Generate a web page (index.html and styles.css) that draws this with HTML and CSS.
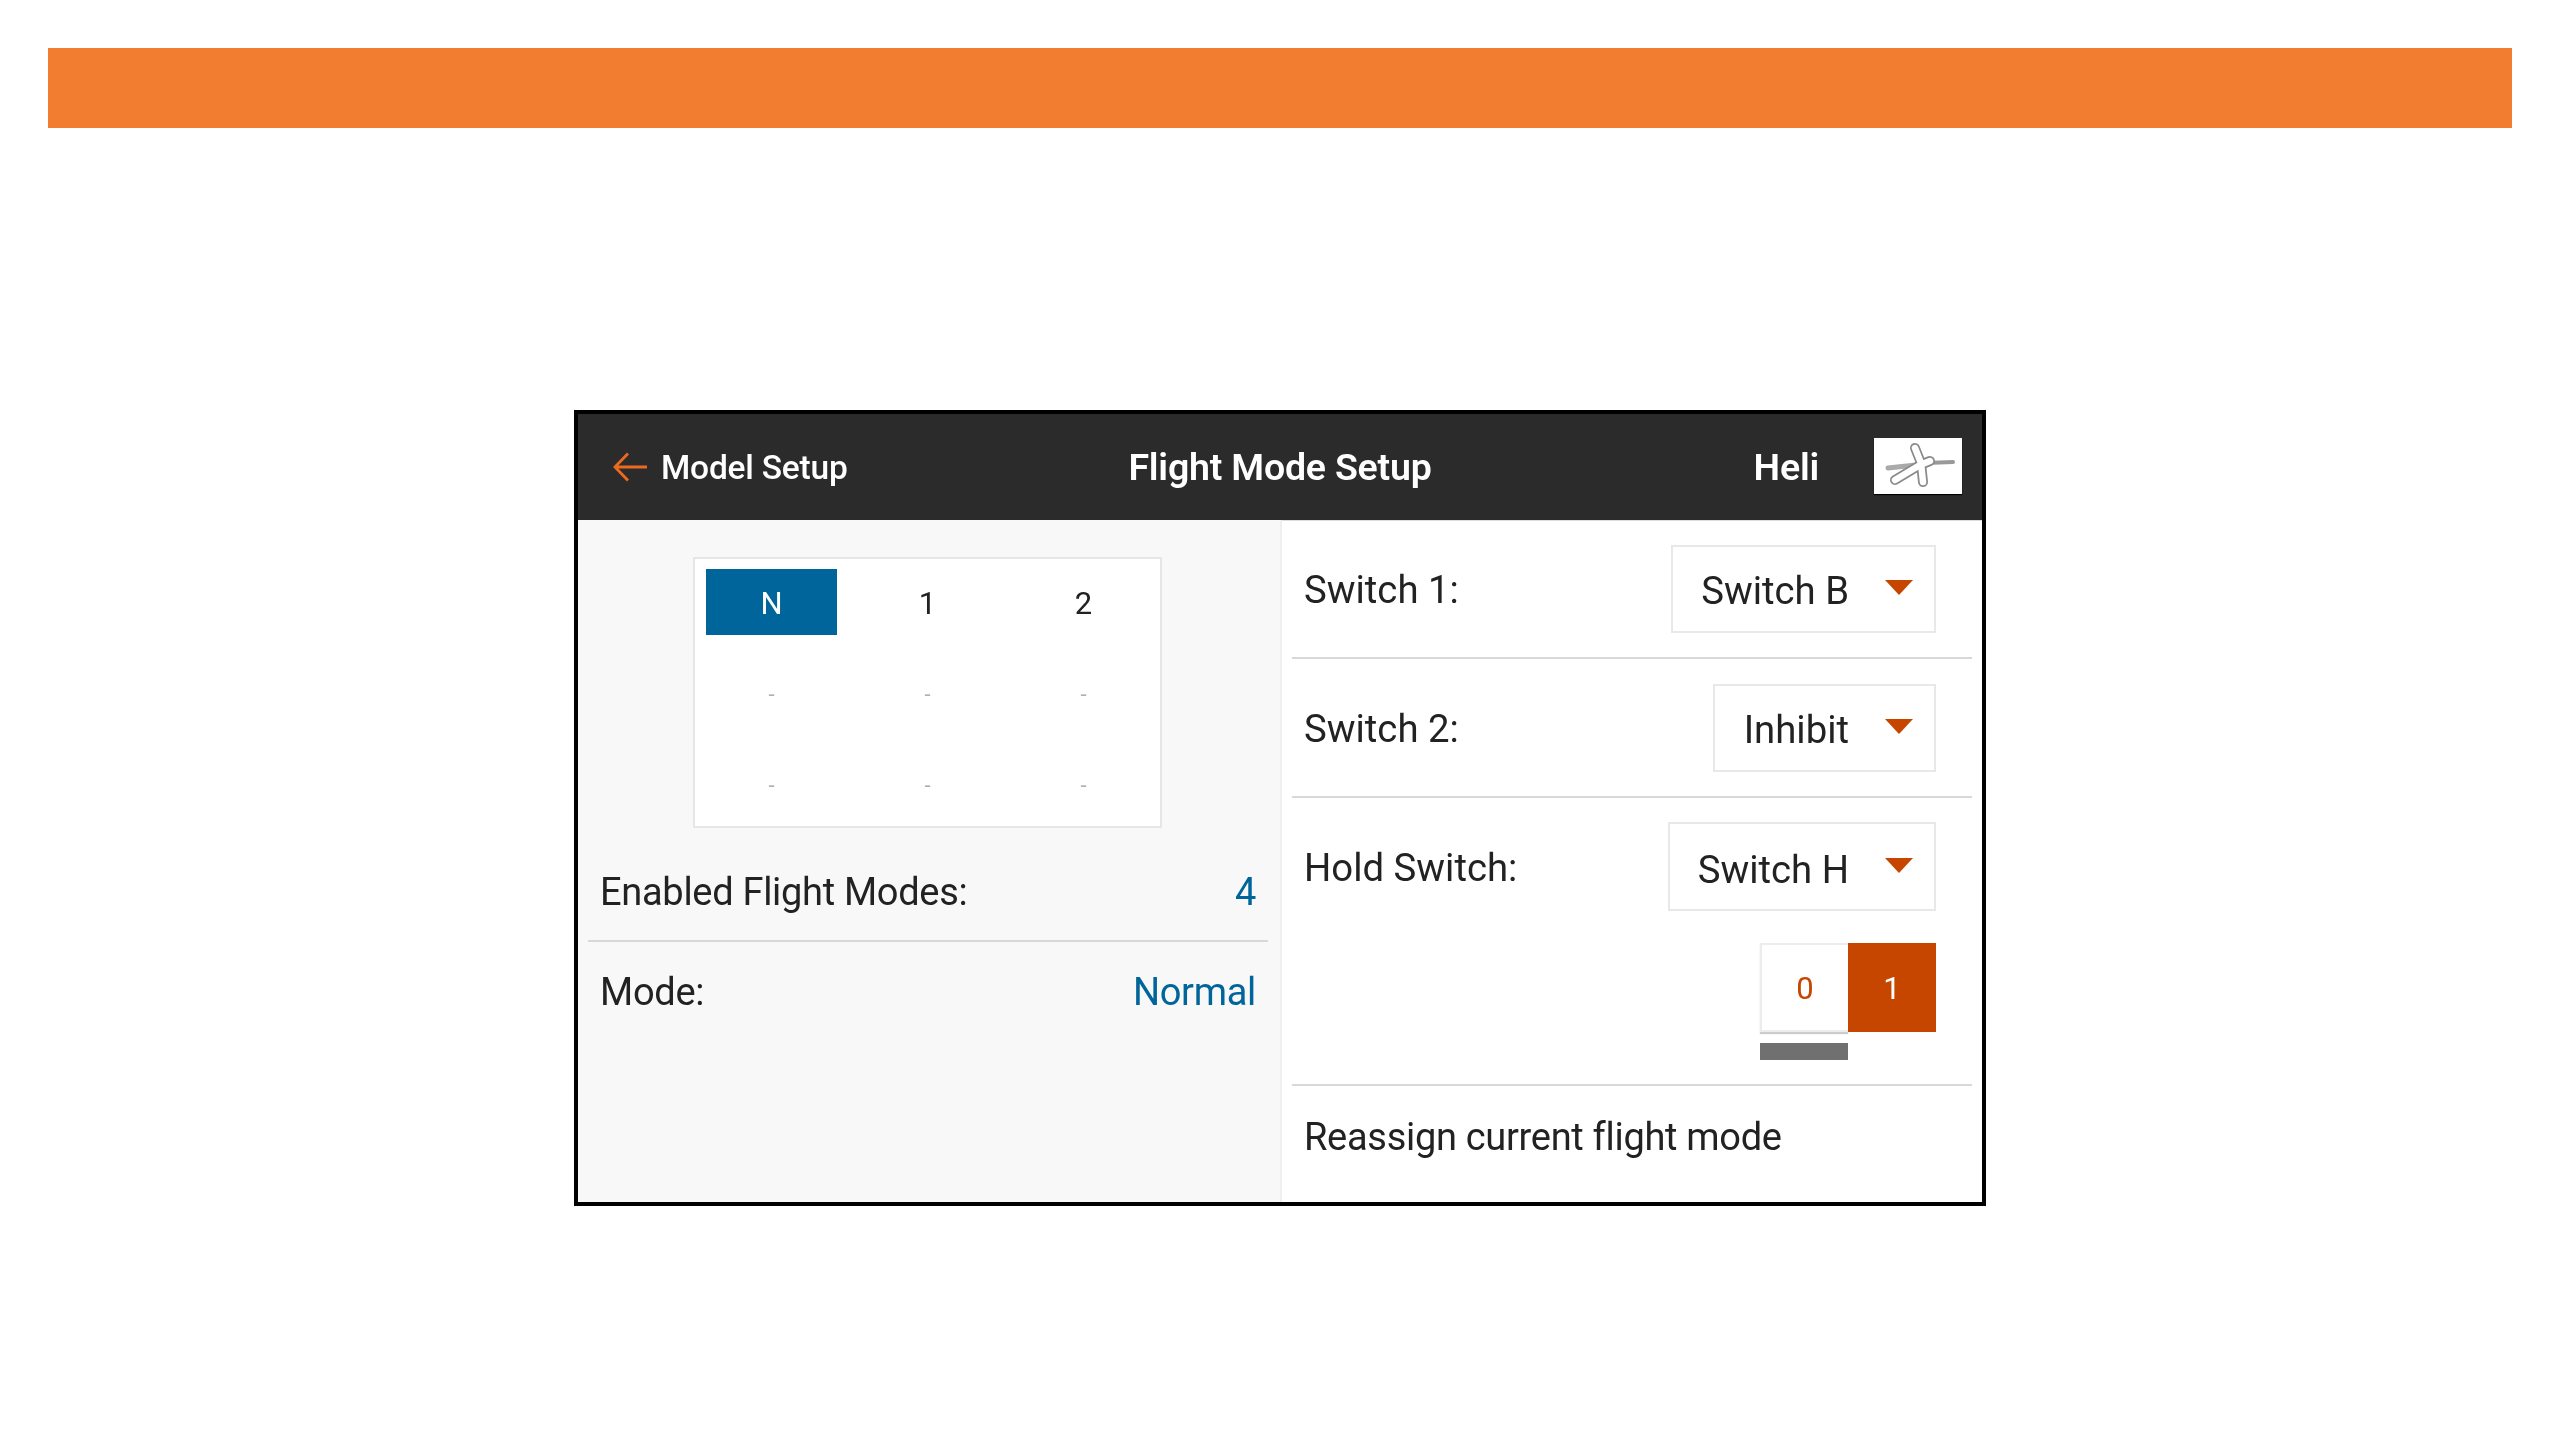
FILE: index.html
```html
<!DOCTYPE html>
<html lang="en">
<head>
<meta charset="utf-8">
<title>Flight Mode Setup</title>
<link rel="stylesheet" href="styles.css">
</head>
<body>
<div class="banner"></div>
<main class="screen">
  <header class="topbar">
    <div class="back">
      <svg class="arrow" viewBox="0 0 34 30" width="34" height="30" aria-hidden="true"><path d="M15 1.5 2 15l13 13.500M2 15h32"/></svg>
      <span>Model Setup</span>
    </div>
    <h1 class="title">Flight Mode Setup</h1>
    <div class="model">
      <span class="model-name">Heli</span>
      <div class="model-icon">
        <svg viewBox="0 0 88 56" width="88" height="56" aria-hidden="true">
          <path class="heli-tail" d="M14 30 42 27"/>
          <path class="heli-rear" d="M52 25 79 24"/>
          <path class="heli-out" d="M41 10 47 25 49 44M21 42 46 27 56 23"/>
          <path class="heli-in" d="M41 10 47 25 49 44M21 42 46 27 56 23"/>
        </svg>
      </div>
    </div>
  </header>
  <div class="body">
    <section class="left">
      <div class="modes">
        <div class="cell active">N</div><div class="cell">1</div><div class="cell">2</div>
        <div class="cell dash">-</div><div class="cell dash">-</div><div class="cell dash">-</div>
        <div class="cell dash">-</div><div class="cell dash">-</div><div class="cell dash">-</div>
      </div>
      <div class="info first"><span>Enabled Flight Modes:</span><span class="val">4</span></div>
      <div class="info"><span>Mode:</span><span class="val">Normal</span></div>
    </section>
    <section class="right">
      <div class="row">
        <span class="label">Switch 1:</span>
        <div class="select w1"><span>Switch B</span><i class="caret"></i></div>
      </div>
      <div class="row">
        <span class="label">Switch 2:</span>
        <div class="select w2"><span>Inhibit</span><i class="caret"></i></div>
      </div>
      <div class="row hold">
        <div class="hold-top">
          <span class="label hold-label">Hold Switch:</span>
          <div class="select w3"><span>Switch H</span><i class="caret"></i></div>
        </div>
        <div class="toggle">
          <div class="tg off">0</div><div class="tg on">1</div>
        </div>
        <div class="indicator"></div>
      </div>
      <div class="reassign">Reassign current flight mode</div>
    </section>
  </div>
</main>
</body>
</html>
```
FILE: styles.css
```css
* { box-sizing: border-box; }
html, body { margin: 0; padding: 0; background: #fff; }
body { width: 2560px; height: 1440px; overflow: hidden; font-family: Roboto, "Liberation Sans", sans-serif; color: #222; }

.banner { height: 80px; margin: 48px 48px 0; background: #f27c30; }

.screen { width: 1412px; height: 796px; margin: 282px auto 0; border: 4px solid #000; display: flex; flex-direction: column; background: #fff; filter: blur(0.7px); }

.topbar { height: 106px; flex: none; background: #2b2b2b; color: #fff; display: grid; grid-template-columns: 1fr auto 1fr; align-items: center; box-shadow: 0 1px 0 #ddd; }
.back { display: flex; align-items: center; gap: 14px; padding-left: 35px; font-size: 33.500px; font-weight: 500; letter-spacing: -0.2px; }
.arrow { fill: none; stroke: #ea6a20; stroke-width: 2.800; }
.title { margin: 0; font-size: 37.500px; font-weight: 600; letter-spacing: -0.2px; }
.model { display: flex; align-items: center; justify-content: flex-end; gap: 55px; padding-right: 20px; }
.model-name { font-size: 37.500px; font-weight: 600; letter-spacing: -0.2px; }
.model-icon { width: 88px; height: 56px; margin-top: -2px; background: #fff; box-shadow: 0 1px 1px #000; }
.model-icon svg { display: block; }
.heli-tail { fill: none; stroke: #aaa; stroke-width: 5; stroke-linecap: round; }
.heli-rear { fill: none; stroke: #999; stroke-width: 4; stroke-linecap: round; }
.heli-out { fill: none; stroke: #8a8a8a; stroke-width: 10; stroke-linecap: round; stroke-linejoin: round; }
.heli-in { fill: none; stroke: #fff; stroke-width: 6.500; stroke-linecap: round; stroke-linejoin: round; }

.body { flex: 1; display: flex; min-height: 0; }

.left { width: 704px; flex: none; background: #f8f8f8; border-right: 2px solid #efefef; padding: 37px 12px 0 10px; }
.modes { width: 469px; height: 271px; margin-left: 105px; background: #fff; border: 2px solid #e6e6e6; padding: 10px 10px 10px 11px; display: grid; grid-template-columns: repeat(3, 131px); grid-template-rows: repeat(3, 66px); column-gap: 25px; row-gap: 25px; }
.cell { display: flex; align-items: center; justify-content: center; padding-top: 2px; font-size: 31px; color: #222; }
.cell.active { background: #00659b; color: #fff; }
.cell.dash { color: #b0b0b0; font-size: 22px; }

.info { display: flex; align-items: center; justify-content: space-between; height: 100px; padding: 0 12px; font-size: 38px; letter-spacing: -0.3px; }
.info.first { height: 98px; margin-top: 16px; border-bottom: 2px solid #d8d8d8; }
.val { color: #00659b; }

.right { flex: 1; padding: 0 10px; display: flex; flex-direction: column; }
.row { height: 139px; padding: 25px 36px 0 12px; border-bottom: 2px solid #d8d8d8; display: flex; justify-content: space-between; align-items: flex-start; font-size: 38.300px; }
.row.hold { height: 288px; padding-top: 24px; flex-direction: column; align-items: stretch; justify-content: flex-start; }
.hold-top { display: flex; justify-content: space-between; align-items: flex-start; height: 89px; }
.label { line-height: 90px; }
.hold-label { line-height: 92px; }
.select { height: 88px; border: 2px solid #e8e8e8; background: #fff; display: flex; align-items: center; justify-content: flex-end; padding: 3px 21px 0 0; gap: 36px; }
.w1 { width: 265px; }
.w2 { width: 223px; }
.w3 { width: 268px; height: 89px; padding-top: 5px; }
.caret { width: 0; height: 0; border-left: 14px solid transparent; border-right: 14px solid transparent; border-top: 15px solid #c64600; margin-top: -7px; }

.toggle { display: flex; align-self: flex-end; margin-top: 32px; }
.tg { width: 88px; height: 89px; display: flex; align-items: center; justify-content: center; padding-top: 2px; font-size: 31px; }
.tg.off { background: #fff; color: #c64600; border: 2px solid #ececec; border-right: none; box-shadow: 0 2px 1px #ccc; }
.tg.on { background: #c64600; color: #fff; }
.indicator { width: 88px; height: 17px; background: #707070; align-self: flex-end; margin: 11px 88px 0 0; }

.reassign { padding: 29px 12px 0; font-size: 38px; letter-spacing: -0.3px; }
```
